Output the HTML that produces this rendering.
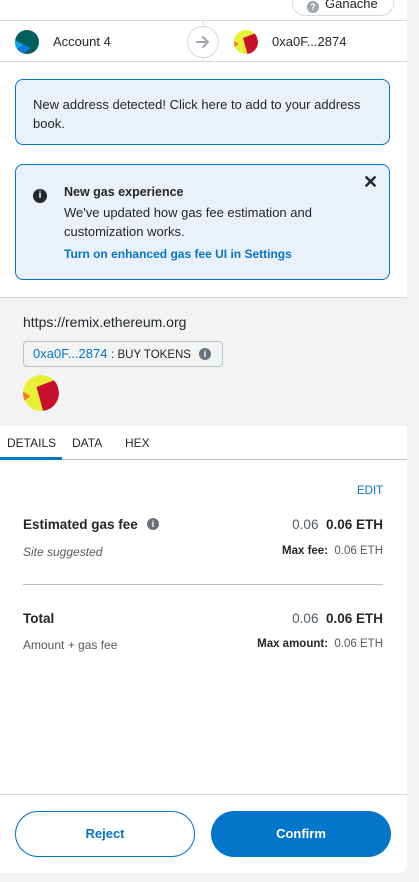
<!DOCTYPE html>
<html><head><meta charset="utf-8"><style>
*{box-sizing:border-box;margin:0;padding:0}
body{width:419px;height:882px;background:#f2f3f4;font-family:"Liberation Sans",sans-serif;color:#24272a;position:relative;overflow:hidden}
.panel{position:absolute;left:0;top:0;width:407px;height:873px;background:#fff;border-radius:0 0 8px 0;overflow:hidden}
.abs{position:absolute}
.pill{left:292px;top:-10px;width:102px;height:26px;border:1px solid #d6d9dc;border-radius:14px;font-size:13px;color:#24272a}
.row{top:20px;left:0;width:407px;height:42px;border-top:1px solid #d6d9dc;border-bottom:1px solid #d6d9dc}
.box{left:15px;width:375px;background:#eaf1fa;border:1px solid #0376c9;border-radius:8px;font-size:13px;line-height:19px;color:#24272a}
.gray{left:0;top:297px;width:407px;height:129px;background:#f2f3f4;border-top:1px solid #d6d9dc}
.t{font-size:13px}
.b{font-weight:bold}
</style></head><body>
<div class="panel">
 <div class="abs pill"><span class="abs" style="left:14px;top:10px;width:12px;height:12px;border-radius:50%;background:#9fa6ae;color:#fff;font-size:9px;font-weight:bold;text-align:center;line-height:12px">?</span><span class="abs" style="left:32px;top:5px">Ganache</span></div>
 <div class="abs row">
  <svg class="abs" style="left:15px;top:9px" width="24" height="24" viewBox="0 0 24 24"><clipPath id="c1"><circle cx="12" cy="12" r="12"/></clipPath><g clip-path="url(#c1)"><rect width="24" height="24" fill="#035f5c"/><polygon points="0,10 16,18 8,24 0,24" fill="#0f7ad6"/><polygon points="0,10 8,15 0,20" fill="#12a6e6"/></g></svg>
  <span class="abs t" style="left:53px;top:13px">Account 4</span>
  <div class="abs" style="left:203px;top:-1px;width:1px;height:42px;background:#d6d9dc"></div>
  <div class="abs" style="left:187px;top:5px;width:32px;height:32px;border:1px solid #d6d9dc;border-radius:50%;background:#fff"><svg class="abs" style="left:8px;top:8px" width="14" height="14" viewBox="0 0 14 14"><path d="M1 7H12M7 2L12 7L7 12" stroke="#9fa6ae" stroke-width="2" fill="none" stroke-linecap="round" stroke-linejoin="round"/></svg></div>
  <svg class="abs" style="left:234px;top:9px" width="24" height="24" viewBox="0 0 24 24"><clipPath id="c2"><circle cx="12" cy="12" r="12"/></clipPath><g clip-path="url(#c2)"><rect width="24" height="24" fill="#e8f035"/><polygon points="9,8 22,3 26,20 14,26" fill="#c8102e"/><polygon points="0,11 5,14 0,18" fill="#f47e20"/><polygon points="20,0 24,0 24,5" fill="#0a6a80"/></g></svg>
  <span class="abs t" style="left:272px;top:13px">0xa0F...2874</span>
 </div>
 <div class="abs box" style="top:79px;height:66px;padding:15px 0 0 17px">New address detected! Click here to add to your address<br>book.</div>
 <div class="abs box" style="top:164px;height:116px">
  <div class="abs" style="left:17px;top:24px;width:14px;height:14px;border-radius:50%;background:#24272a;color:#fff;font-size:10px;font-weight:bold;text-align:center;line-height:14px">i</div>
  <div class="abs b" style="left:48px;top:18px;font-size:12.5px">New gas experience</div>
  <div class="abs" style="left:48px;top:38px">We've updated how gas fee estimation and<br>customization works.</div>
  <div class="abs b" style="left:48px;top:80px;color:#0376c9;font-size:12px">Turn on enhanced gas fee UI in Settings</div>
  <div class="abs b" style="left:347px;top:8px;font-size:18px">✕</div>
 </div>
 <div class="abs gray">
  <div class="abs" style="left:23px;top:16px;font-size:14px">https://remix.ethereum.org</div>
  <div class="abs" style="left:23px;top:43px;width:200px;height:26px;border:1px solid #bbc0c5;border-radius:4px;font-size:13px;line-height:24px;padding-left:9px"><span style="color:#0376c9">0xa0F...2874</span> <span style="font-size:11.5px;color:#24272a">: BUY TOKENS</span><span class="abs" style="left:175px;top:6px;width:12px;height:12px;border-radius:50%;background:#6a737d;color:#fff;font-size:9px;font-weight:bold;text-align:center;line-height:12px">i</span></div>
  <svg class="abs" style="left:23px;top:77px" width="36" height="36" viewBox="0 0 24 24"><clipPath id="c3"><circle cx="12" cy="12" r="12"/></clipPath><g clip-path="url(#c3)"><rect width="24" height="24" fill="#e8f035"/><polygon points="9,8 22,3 26,20 14,26" fill="#c8102e"/><polygon points="0,11 5,14 0,18" fill="#f47e20"/><polygon points="20,0 24,0 24,5" fill="#0a6a80"/></g></svg>
 </div>
 <div class="abs" style="left:0;top:426px;width:407px;height:34px;border-bottom:1px solid #bbc0c5;font-size:12px">
  <span class="abs" style="left:7px;top:10px">DETAILS</span><span class="abs" style="left:72px;top:10px">DATA</span><span class="abs" style="left:125px;top:10px">HEX</span>
  <div class="abs" style="left:0;top:31px;width:62px;height:3px;background:#0376c9"></div>
 </div>
 <div class="abs" style="left:357px;top:485px;font-size:11.5px;color:#0376c9">EDIT</div>
 <div class="abs b" style="left:23px;top:517px;font-size:13.5px">Estimated gas fee</div>
 <div class="abs" style="left:147px;top:518px;width:12px;height:12px;border-radius:50%;background:#6a737d;color:#fff;font-size:9px;font-weight:bold;text-align:center;line-height:12px">i</div>
 <div class="abs" style="right:24px;top:517px;font-size:13.5px"><span style="color:#535a61">0.06</span>&nbsp; <b>0.06 ETH</b></div>
 <div class="abs" style="left:23px;top:545px;font-size:12px;font-style:italic;color:#535a61">Site suggested</div>
 <div class="abs" style="right:24px;top:545px;font-size:11.5px;color:#535a61"><b style="color:#24272a">Max fee:</b>&nbsp; 0.06 ETH</div>
 <div class="abs" style="left:23px;top:584px;width:360px;height:1px;background:#bbc0c5"></div>
 <div class="abs b" style="left:23px;top:611px;font-size:13.5px">Total</div>
 <div class="abs" style="right:24px;top:611px;font-size:13.5px"><span style="color:#535a61">0.06</span>&nbsp; <b>0.06 ETH</b></div>
 <div class="abs" style="left:23px;top:638px;font-size:12px;color:#535a61">Amount + gas fee</div>
 <div class="abs" style="right:24px;top:638px;font-size:11.5px;color:#535a61"><b style="color:#24272a">Max amount:</b>&nbsp; 0.06 ETH</div>
 <div class="abs" style="left:0;top:794px;width:407px;height:1px;background:#d6d9dc"></div>
 <div class="abs b" style="left:15px;top:811px;width:180px;height:46px;border:1px solid #0376c9;border-radius:23px;color:#0376c9;font-size:13px;text-align:center;line-height:44px">Reject</div>
 <div class="abs b" style="left:211px;top:811px;width:180px;height:46px;background:#0376c9;border-radius:23px;color:#fff;font-size:13px;text-align:center;line-height:46px">Confirm</div>
</div>
</body></html>
